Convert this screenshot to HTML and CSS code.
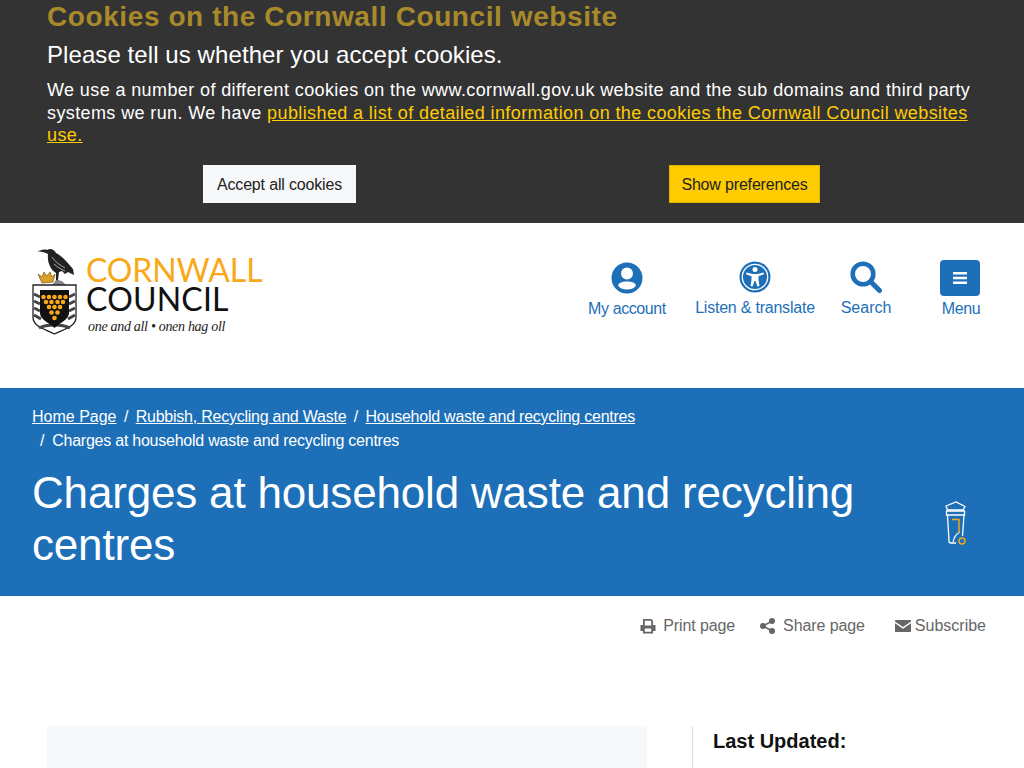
FILE: index.html
```html
<!DOCTYPE html>
<html lang="en">
<head>
<meta charset="utf-8">
<title>Charges at household waste and recycling centres - Cornwall Council</title>
<link rel="stylesheet" href="styles.css">
</head>
<body>
<section class="cookies">
  <h2 class="cookies-title">Cookies on the Cornwall Council website</h2>
  <p class="cookies-lead">Please tell us whether you accept cookies.</p>
  <p class="cookies-text">We use a number of different cookies on the www.cornwall.gov.uk website and the sub domains and third party systems we run. We have <a href="#">published a list of detailed information on the cookies the Cornwall Council websites use.</a></p>
  <div class="cookies-actions">
    <div class="cookies-cell"><button class="btn btn-light">Accept all cookies</button></div>
    <div class="cookies-cell"><button class="btn btn-yellow">Show preferences</button></div>
  </div>
</section>
<header class="site-header">
  <a class="logo" href="#">
    <svg class="crest" width="46" height="88" viewBox="0 0 46 88">
      <path d="M5 5 C8 3 12 2 15 3 C18 1 22 2 24 6 C29 8 35 15 41 22 L42 28 L36 25 L33 27 L30 24 L27 25 L26 33 L29 35 L24 35 L24 26 C19 23 15 16 16 7 C12 5 8 4 5 5 Z" fill="#222"/>
      <path d="M20 10 C23 15 28 18 33 21 M22 17 C25 20 29 22 33 24" fill="none" stroke="#aaa" stroke-width="1"/>
      <path d="M6 27 L10 30 L12 25 L15 29 L18 25 L20 30 L23 27 L21 35 L10 36 Z" fill="#d9a02c" stroke="#7a5a10" stroke-width=".7"/>
      <path d="M20 38 L24 33 L30 34 L34 38 Z" fill="#888"/>
      <path d="M1 38 H44 V70 C44 80 32 82 22.500 87 C13 82 1 80 1 70 Z" fill="#fff" stroke="#222" stroke-width="1.300"/>
      <path d="M2 47 L8 50 M2 54 L8 57 M2 61 L8 64 M2 68 L9 72 M43 47 L37 50 M43 54 L37 57 M43 61 L37 64 M43 68 L36 72 M7 81 C15 77 30 77 38 81" stroke="#444" stroke-width="3" fill="none"/>
      <path d="M8 43 H37 V66 C37 73 27 76 22.500 81 C18 76 8 73 8 66 Z" fill="#111"/>
      <g fill="#f9a81a">
        <circle cx="11.500" cy="50" r="2.300"/><circle cx="17" cy="50" r="2.300"/><circle cx="22.500" cy="50" r="2.300"/><circle cx="28" cy="50" r="2.300"/><circle cx="33.500" cy="50" r="2.300"/>
        <circle cx="14" cy="55" r="2.300"/><circle cx="19.500" cy="55" r="2.300"/><circle cx="25.500" cy="55" r="2.300"/><circle cx="31" cy="55" r="2.300"/>
        <circle cx="17" cy="60" r="2.300"/><circle cx="22.500" cy="60" r="2.300"/><circle cx="28" cy="60" r="2.300"/>
        <circle cx="19.500" cy="65.500" r="2.300"/><circle cx="25.500" cy="65.500" r="2.300"/>
        <circle cx="22.500" cy="71" r="2.300"/>
      </g>
    </svg>
    <span class="logo-words">
      <span class="logo-cornwall">CORNWALL</span>
      <span class="logo-council">COUNCIL</span>
      <span class="logo-motto">one and all • onen hag oll</span>
    </span>
  </a>
  <nav class="tools">
    <a class="tool tool-account" href="#">
      <svg width="32" height="32" viewBox="0 0 32 32"><circle cx="16" cy="16" r="15.500" fill="#1d6fb8"/><circle cx="16" cy="11.500" r="6" fill="#fff"/><path d="M7 23.500 C8 20.500 11 19.500 16 19.500 S24 20.500 25 23.500 C23 26.500 19.500 27.500 16 27.500 S9 26.500 7 23.500 Z" fill="#fff"/></svg>
      <span>My account</span>
    </a>
    <a class="tool tool-listen" href="#">
      <svg width="32" height="32" viewBox="0 0 32 32"><circle cx="16" cy="16" r="15.500" fill="#1d6fb8"/><circle cx="16" cy="16" r="12.700" fill="none" stroke="#fff" stroke-width="1.300"/><circle cx="16" cy="8.500" r="2.500" fill="#fff"/><path d="M7.500 11.500 L13.500 13 H18.500 L24.500 11.500 L25 13.300 L19.500 15.300 V19 L20.500 25 L18.500 25.500 L16.500 20 H15.500 L13.500 25.500 L11.500 25 L12.500 19 V15.300 L7 13.300 Z" fill="#fff"/></svg>
      <span>Listen &amp; translate</span>
    </a>
    <a class="tool tool-search" href="#">
      <svg width="32" height="32" viewBox="0 0 32 32"><circle cx="13" cy="13" r="10.300" fill="none" stroke="#1d6fb8" stroke-width="4.600"/><path d="M20.500 20.500 L29.500 29.500" stroke="#1d6fb8" stroke-width="5" stroke-linecap="round"/></svg>
      <span>Search</span>
    </a>
    <a class="tool tool-menu" href="#">
      <span class="menu-box"><svg width="14" height="12" viewBox="0 0 14 12"><path d="M0 0H14V2.500H0ZM0 4.800H14V7.200H0ZM0 9.500H14V12H0Z" fill="#fff"/></svg></span>
      <span class="menu-label">Menu</span>
    </a>
  </nav>
</header>
<section class="hero">
  <ol class="crumbs">
    <li><a href="#">Home Page</a></li>
    <li><a href="#">Rubbish, Recycling and Waste</a></li>
    <li><a href="#">Household waste and recycling centres</a></li>
    <li>Charges at household waste and recycling centres</li>
  </ol>
  <div class="hero-row">
    <h1>Charges at household waste and recycling centres</h1>
    <svg class="bin" width="24" height="46" viewBox="0 0 24 46">
      <path d="M2 5 L12 1 L21 5.500 L19 9 H3.500 Z" fill="none" stroke="#fff" stroke-width="1.300"/>
      <path d="M2.500 10 H20.500 V14 H2.500 Z" fill="none" stroke="#fff" stroke-width="1.300"/>
      <path d="M3.500 14 L5 40 C5 41 6 42 7 42 H12 M20 14 L18.500 35" fill="none" stroke="#fff" stroke-width="1.300"/>
      <path d="M9 41 C10 36 12 33 16 31" fill="none" stroke="#fff" stroke-width="1.200"/>
      <path d="M8 18.500 H15 V32" fill="none" stroke="#f9a81a" stroke-width="1.400"/>
      <circle cx="18" cy="40" r="3" fill="none" stroke="#f9a81a" stroke-width="1.400"/>
    </svg>
  </div>
</section>
<div class="actions">
  <a class="action action-print" href="#">
    <svg width="16" height="16" viewBox="0 0 16 16"><path d="M3 7V1H11.500L13 2.500V7H15.500V13H13V15.500H3V13H.5V7ZM4.800 2.800V7.500H11.200V2.800ZM4.800 10.500V13.700H11.200V10.500Z" fill="#666" fill-rule="evenodd"/></svg>
    <span>Print page</span>
  </a>
  <a class="action action-share" href="#">
    <svg width="16" height="16" viewBox="0 0 16 16"><circle cx="12" cy="3" r="3" fill="#666"/><circle cx="3" cy="8" r="3" fill="#666"/><circle cx="12" cy="13" r="3" fill="#666"/><path d="M12 3L3 8L12 13" stroke="#666" stroke-width="1.600" fill="none"/></svg>
    <span>Share page</span>
  </a>
  <a class="action action-sub" href="#">
    <svg width="16" height="12" viewBox="0 0 16 12"><path d="M1 0H15C15.600 0 16 .4 16 1V1.500L8 7L0 1.500V1C0 .4.400 0 1 0ZM0 3.200L8 8.700L16 3.200V11C16 11.600 15.600 12 15 12H1C.4 12 0 11.600 0 11Z" fill="#666"/></svg>
    <span>Subscribe</span>
  </a>
</div>
<main class="content">
  <div class="article"></div>
  <aside class="side"><h2>Last Updated:</h2></aside>
</main>
</body>
</html>
```
FILE: styles.css
```css
* { box-sizing: border-box; }
html, body { margin: 0; padding: 0; }
body { font-family: "Liberation Sans", Arial, sans-serif; color: #111; background: #fff; }
a { color: inherit; }

.cookies { background: #333; height: 223px; padding: 0 47px; color: #fff; }
.cookies-title { margin: 0; font-size: 28px; line-height: 34px; font-weight: 700; color: #a98a2b; letter-spacing: .59px; }
.cookies-lead { margin: 4px 0 0; font-size: 24px; line-height: 34px; letter-spacing: .08px; }
.cookies-text { margin: 7px 0 0; font-size: 18px; line-height: 22.5px; letter-spacing: .39px; }
.cookies-text a { color: #fc0; }
.cookies-actions { display: grid; grid-template-columns: 465px 465px; margin-top: 18.5px; }
.cookies-cell { display: flex; justify-content: center; }
.btn { font: 16px "Liberation Sans", Arial, sans-serif; letter-spacing: -.17px; height: 38px; padding: 1px 13px 0; border: 1px solid transparent; color: #222; cursor: pointer; }
.btn-light { background: #f7f8fa; }
.btn-yellow { background: #fc0; border-color: #e0b400; padding: 1px 11.5px 0; }

.site-header { height: 165px; display: flex; align-items: flex-start; justify-content: space-between; padding: 0 44px 0 32px; }
.logo { display: flex; margin-top: 24px; text-decoration: none; }
.crest { display: block; }
.logo-words { display: flex; flex-direction: column; margin-left: 8px; padding-top: 8px; }
.logo-cornwall { font: 400 32px/30px Lato, sans-serif; color: #f9a81a; letter-spacing: -.1px; white-space: nowrap; }
.logo-council { font: 400 32px/28px Lato, sans-serif; color: #111; letter-spacing: .2px; white-space: nowrap; }
.logo-motto { font: italic 14px/20px "Liberation Serif", serif; color: #222; letter-spacing: -.3px; margin-top: 4px; margin-left: 2px; white-space: nowrap; }

.tools { display: flex; margin-top: 37px; }
.tool { display: flex; flex-direction: column; align-items: center; font-size: 16px; line-height: 20px; color: #1d6fb8; text-decoration: none; white-space: nowrap; }
.tool svg { display: block; }
.tool span { margin-top: 5px; }
.tool-account { width: 78px; padding-top: 2px; letter-spacing: -.4px; }
.tool-listen { width: 120px; margin-left: 29px; padding-top: 1px; letter-spacing: -.22px; }
.tool-search { width: 50px; margin-left: 26px; padding-top: 1px; }
.tool-menu { width: 40px; margin-left: 49px; letter-spacing: -.4px; }
.tool .menu-box { display: flex; align-items: center; justify-content: center; width: 40px; height: 36px; margin-top: 0; background: #1d6fb8; border-radius: 4px; }
.tool .menu-label { margin-top: 3px; padding-left: 2px; }

.hero { background: #1d6fb8; height: 208px; padding: 17px 32px 0; color: #fff; }
.crumbs { list-style: none; margin: 0; padding: 0; display: flex; flex-wrap: wrap; font-size: 16px; line-height: 24px; width: 720px; letter-spacing: -.24px; }
.crumbs li:first-child { letter-spacing: 0; }
.crumbs li + li::before { content: "/"; padding: 0 7.5px; }
.crumbs li:last-child::before { padding: 0 8px; }
.hero-row { display: flex; justify-content: space-between; align-items: flex-start; margin-top: 14px; }
.hero h1 { margin: 0; width: 860px; font-size: 44px; line-height: 52px; font-weight: 400; letter-spacing: -.18px; }
.bin { margin: 34px 24px 0 0; }

.actions { display: flex; justify-content: flex-end; height: 130px; padding: 20px 38px 0 0; color: #666; font-size: 16px; line-height: 20px; }
.action { display: flex; align-items: center; height: 20px; text-decoration: none; letter-spacing: -.1px; }
.action-print { margin-right: 25px; }
.action-print span { margin-left: 7px; }
.action-share { margin-right: 30px; }
.action-share span { margin-left: 7px; }
.action-sub { letter-spacing: 0; }
.action-sub span { margin-left: 4px; }

.content { display: flex; padding-left: 47px; }
.article { width: 600px; height: 300px; background: #f7f8fa; }
.side { margin-left: 45px; padding-left: 20px; border-left: 1px solid #ddd; }
.side h2 { margin: 4px 0 0; font-size: 20px; line-height: 22px; }
```
